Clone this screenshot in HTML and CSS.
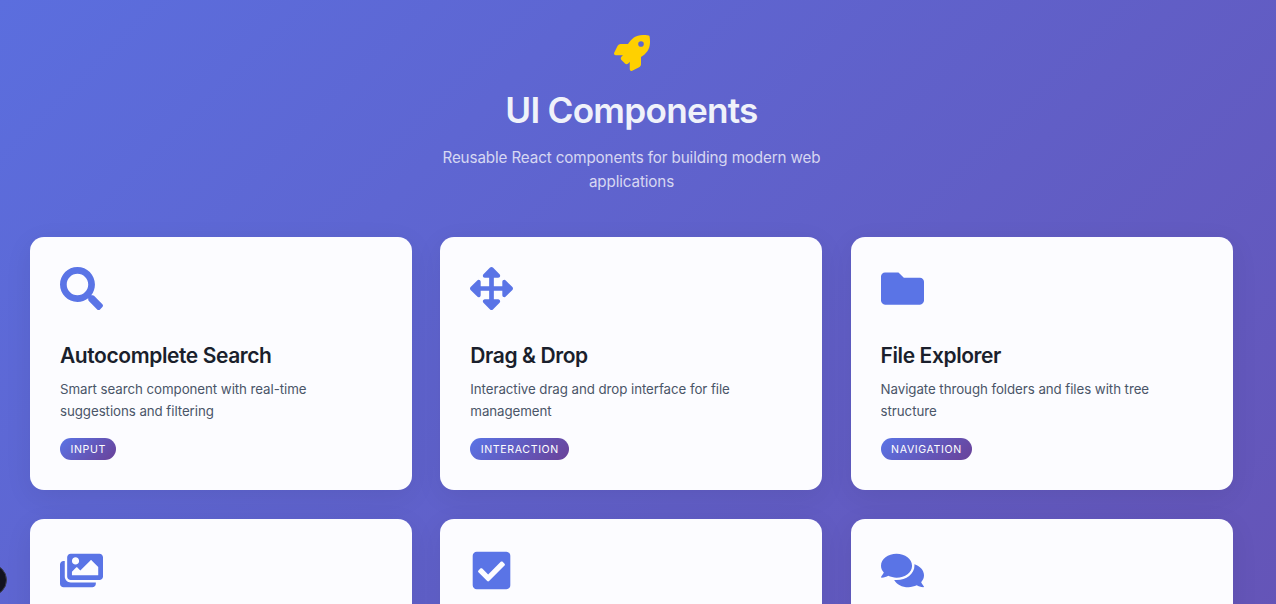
FILE: index.html
```html
<!DOCTYPE html>
<html lang="en">
<head>
<meta charset="utf-8">
<title>UI Components</title>
<link rel="stylesheet" href="styles.css">
</head>
<body>
<main class="page">
  <header class="hero">
    <svg class="hero-icon" viewBox="0 0 512 512"><path d="M505.12 19.094c-1.19-5.532-6.658-11-12.207-12.188C460.716 0 435.507 0 410.407 0 307.175 0 245.27 55.203 199.052 128H94.838c-16.348.016-35.557 11.875-42.887 26.484L2.516 253.297A28.4 28.4 0 0 0 0 264a24.009 24.009 0 0 0 24.006 24h103.81l-22.474 22.469c-11.366 11.361-12.997 32.258 0 45.25l50.904 50.906c11.156 11.188 32.156 13.156 45.277 0l22.475-22.469V488a24.009 24.009 0 0 0 24.006 24 28.56 28.56 0 0 0 10.707-2.516l98.728-49.39c14.629-7.297 26.508-26.5 26.508-42.86V312.797c72.598-46.313 128.035-108.406 128.035-211.094.093-25.203.093-50.406-6.862-82.609ZM384.04 168A40 40 0 1 1 424.05 128 40.023 40.023 0 0 1 384.04 168Z"/></svg>
    <h1 class="hero-title">UI Components</h1>
    <p class="hero-text">Reusable React components for building modern web applications</p>
  </header>
  <section class="grid">
    <article class="card">
      <svg class="card-icon" viewBox="0 0 512 512"><path d="M505 442.7L405.3 343c-4.5-4.5-10.6-7-17-7H372c27.6-35.3 44-79.7 44-128C416 93.1 322.9 0 208 0S0 93.1 0 208s93.1 208 208 208c48.3 0 92.7-16.4 128-44v16.3c0 6.4 2.5 12.5 7 17l99.7 99.7c9.4 9.4 24.6 9.4 33.9 0l28.3-28.3c9.4-9.4 9.4-24.6.1-34zM208 336c-70.7 0-128-57.2-128-128 0-70.7 57.2-128 128-128 70.7 0 128 57.2 128 128 0 70.7-57.2 128-128 128z"/></svg>
      <h2 class="card-title">Autocomplete Search</h2>
      <p class="card-text">Smart search component with real-time suggestions and filtering</p>
      <span class="tag">Input</span>
    </article>
    <article class="card">
      <svg class="card-icon" viewBox="0 0 512 512"><path d="M352.201 425.775l-79.196 79.196c-9.373 9.373-24.568 9.373-33.941 0l-79.196-79.196c-15.119-15.119-4.411-40.971 16.971-40.97h51.162L228 284H127.196v51.162c0 21.382-25.851 32.09-40.971 16.971L7.029 272.937c-9.373-9.373-9.373-24.569 0-33.941L86.225 159.8c15.119-15.119 40.971-4.411 40.971 16.971V228H228V127.196h-51.23c-21.382 0-32.09-25.851-16.971-40.971l79.196-79.196c9.373-9.373 24.568-9.373 33.941 0l79.196 79.196c15.119 15.119 4.411 40.971-16.971 40.971h-51.162V228h100.804v-51.162c0-21.382 25.851-32.09 40.97-16.971l79.196 79.196c9.373 9.373 9.373 24.569 0 33.941L425.773 352.2c-15.119 15.119-40.971 4.411-40.97-16.971V284H284v100.804h51.23c21.382 0 32.09 25.851 16.971 40.971z"/></svg>
      <h2 class="card-title">Drag &amp; Drop</h2>
      <p class="card-text">Interactive drag and drop interface for file management</p>
      <span class="tag">Interaction</span>
    </article>
    <article class="card">
      <svg class="card-icon" viewBox="0 0 512 512"><path d="M464 128H272l-64-64H48C21.49 64 0 85.49 0 112v288c0 26.51 21.49 48 48 48h416c26.51 0 48-21.49 48-48V176c0-26.51-21.49-48-48-48z"/></svg>
      <h2 class="card-title">File Explorer</h2>
      <p class="card-text">Navigate through folders and files with tree structure</p>
      <span class="tag">Navigation</span>
    </article>
    <article class="card">
      <svg class="card-icon" viewBox="0 0 576 512"><path d="M480 416v16c0 26.51-21.49 48-48 48H48c-26.51 0-48-21.49-48-48V176c0-26.51 21.49-48 48-48h16v208c0 44.112 35.888 80 80 80h336zm96-80V80c0-26.51-21.49-48-48-48H144c-26.51 0-48 21.49-48 48v256c0 26.51 21.49 48 48 48h384c26.51 0 48-21.49 48-48zM256 128c0 26.51-21.49 48-48 48s-48-21.49-48-48 21.49-48 48-48 48 21.49 48 48zm-96 144l55.515-55.515c4.686-4.686 12.284-4.686 16.971 0L272 256l135.515-135.515c4.686-4.686 12.284-4.686 16.971 0L512 208v112H160v-48z"/></svg>
    </article>
    <article class="card">
      <svg class="card-icon" viewBox="0 0 448 512"><path d="M400 480H48c-26.51 0-48-21.49-48-48V80c0-26.51 21.49-48 48-48h352c26.51 0 48 21.49 48 48v352c0 26.51-21.49 48-48 48zm-204.686-98.059l184-184c6.248-6.248 6.248-16.379 0-22.627l-22.627-22.627c-6.248-6.248-16.379-6.249-22.628 0L184 302.745l-70.059-70.059c-6.248-6.248-16.379-6.248-22.628 0l-22.627 22.627c-6.248 6.248-6.248 16.379 0 22.627l104 104c6.249 6.25 16.379 6.25 22.628.001z"/></svg>
    </article>
    <article class="card">
      <svg class="card-icon" viewBox="0 0 576 512"><path d="M416 192c0-88.4-93.1-160-208-160S0 103.6 0 192c0 34.3 14.1 65.9 38 92-13.4 30.2-35.5 54.2-35.8 54.5-2.2 2.3-2.8 5.7-1.5 8.7S4.8 352 8 352c36.6 0 66.9-12.3 88.7-25 32.2 15.7 70.3 25 111.3 25 114.9 0 208-71.6 208-160zm122 220c23.9-26 38-57.7 38-92 0-66.9-53.5-124.2-129.3-148.1.9 6.6 1.3 13.3 1.3 20.1 0 105.9-107.7 192-240 192-10.8 0-21.3-.8-31.7-1.9C207.8 439.6 281.8 480 368 480c41 0 79.1-9.2 111.3-25 21.8 12.7 52.1 25 88.7 25 3.2 0 6.1-1.9 7.3-4.8 1.3-2.9.7-6.3-1.5-8.7-.3-.3-22.4-24.2-35.8-54.5z"/></svg>
    </article>
  </section>
</main>
<div class="edge-button"></div>
</body>
</html>
```
FILE: styles.css
```css
* { box-sizing: border-box; }
html, body { height: 100%; }
body {
  margin: 0;
  overflow: hidden;
  font-family: Inter, "Liberation Sans", sans-serif;
  background: linear-gradient(135deg, #5b6ede 0%, #6b439d 100%) 0 0 / 100% 1900px no-repeat;
}
.page {
  height: 604px;
  padding: 35px 43px 0 30px;
  overflow: hidden;
}
.hero {
  height: 202px;
  display: flex;
  flex-direction: column;
  align-items: center;
  text-align: center;
}
.hero-icon { width: 36px; height: 36px; fill: #ffd000; }
.hero-title {
  margin: 18px 0 0;
  font-size: 35.2px;
  line-height: 43px;
  font-weight: 600;
  letter-spacing: -0.76px;
  color: #f0f2fa;
}
.hero-text {
  margin: 14px 0 0;
  width: 400px;
  font-size: 15.2px;
  line-height: 24px;
  letter-spacing: -0.12px;
  color: rgba(255, 255, 255, 0.75);
}
.grid {
  display: grid;
  grid-template-columns: repeat(3, 382px);
  grid-auto-rows: 253px;
  gap: 29px 28.3px;
}
.card {
  padding: 30px;
  border-radius: 14px;
  background: #fcfcff;
  box-shadow: 0 7px 28px rgba(0, 0, 0, 0.07);
}
.card-icon { display: block; width: 43px; height: 43px; fill: #5a74e6; }
.card-title {
  margin: 33px 0 0;
  font-size: 21px;
  line-height: 26px;
  font-weight: 600;
  letter-spacing: -0.41px;
  color: #1a1f2c;
}
.card-text {
  margin: 9px 0 0;
  font-size: 13.3px;
  line-height: 22px;
  letter-spacing: -0.06px;
  color: #4a5568;
}
.tag {
  display: block;
  width: fit-content;
  height: 22px;
  margin-top: 16px;
  padding: 1px 10.5px 0;
  border-radius: 11px;
  background: linear-gradient(135deg, #5a74e6, #6a4198);
  font-size: 10.6px;
  line-height: 21px;
  font-weight: 400;
  letter-spacing: 0.62px;
  text-transform: uppercase;
  color: #fff;
}
/* Floating round button partly off the left edge */
.edge-button {
  position: absolute;
  left: -25px;
  top: 564px;
  width: 32px;
  height: 32px;
  border: 1px solid #3c3c4c;
  border-radius: 50%;
  background: #12121f;
}
```
